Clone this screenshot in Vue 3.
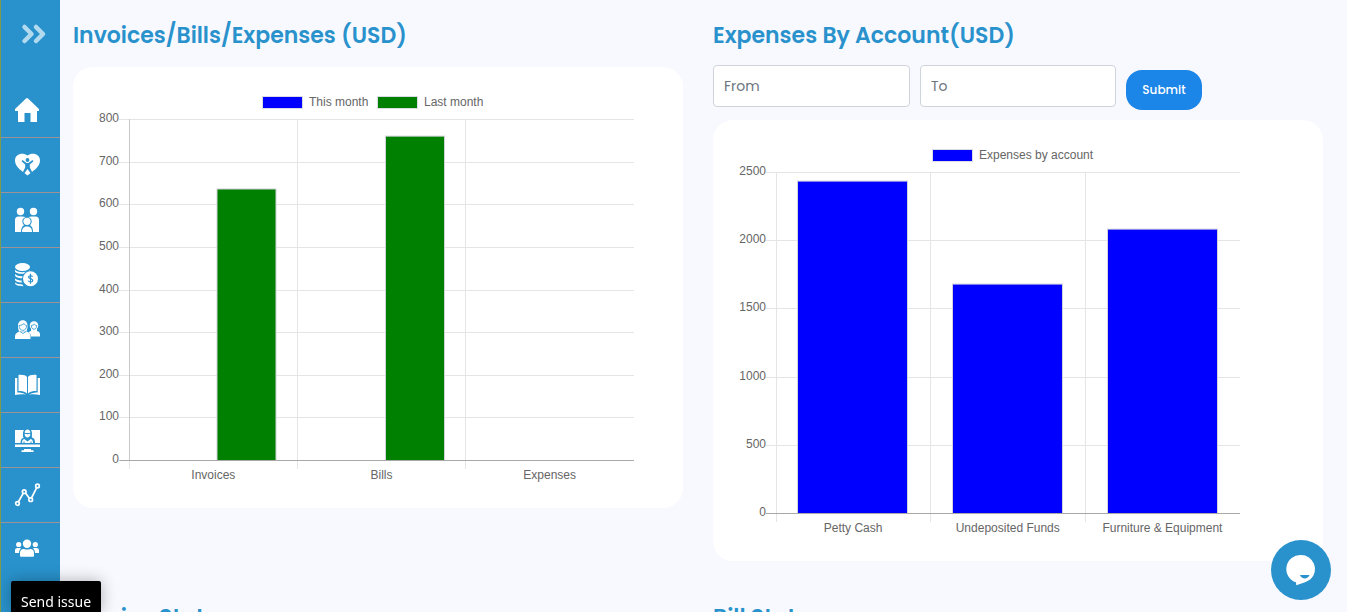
<script setup>
const navItems = ['Home', 'Wellbeing', 'Families', 'Finance', 'Staff', 'Learning', 'Classes', 'Reports', 'Groups']

const monthly = {
  title: 'Invoices, bills and expenses by month',
  left: 56.5,
  right: 561,
  tickX: 46,
  max: 800,
  step: 100,
  labels: ['Invoices', 'Bills', 'Expenses'],
  legend: [
    { text: 'This month', color: 'blue', x: 190 },
    { text: 'Last month', color: 'green', x: 305 }
  ],
  bars: [
    { x: 144, w: 59, value: 637, color: 'green' },
    { x: 312.5, w: 59, value: 761, color: 'green' }
  ]
}

const accounts = {
  title: 'Expenses by account',
  left: 63,
  right: 527,
  tickX: 53,
  max: 2500,
  step: 500,
  labels: ['Petty Cash', 'Undeposited Funds', 'Furniture & Equipment'],
  legend: [{ text: 'Expenses by account', color: 'blue', x: 220 }],
  bars: [
    { x: 84.5, w: 110, value: 2437, color: 'blue' },
    { x: 239.5, w: 110, value: 1682, color: 'blue' },
    { x: 394.5, w: 110, value: 2085, color: 'blue' }
  ]
}

const TOP = 52.5
const BOTTOM = 393.5

const yOf = (chart, value) => BOTTOM - ((BOTTOM - TOP) * value) / chart.max
const ticks = (chart) =>
  Array.from({ length: chart.max / chart.step + 1 }, (_, i) => {
    const value = i * chart.step
    return { value, y: Math.floor(yOf(chart, value)) + 0.5 }
  })
const band = (chart) => (chart.right - chart.left) / chart.labels.length
const columns = (chart) =>
  chart.labels.map((text, i) => ({
    text,
    x: Math.floor(chart.left + band(chart) * i) + 0.5,
    mid: chart.left + band(chart) * (i + 0.5) - 0.25
  }))

const panels = [
  { heading: 'Invoices/Bills/Expenses (USD)', chart: monthly, filter: false },
  { heading: 'Expenses By Account(USD)', chart: accounts, filter: true }
]
</script>

<template>
  <div class="app">
    <aside class="sidebar">
      <button class="toggle" type="button" aria-label="Expand menu">
        <svg width="28" height="24" viewBox="0 0 28 24">
          <path d="M5.500 5l7 7-7 7M17 5l7 7-7 7" fill="none" stroke="#b2daef" stroke-width="4.500" stroke-linecap="round" stroke-linejoin="round" />
        </svg>
      </button>
      <nav>
        <a v-for="(item, i) in navItems" :key="item" class="nav-item" href="#" :aria-label="item">
          <svg width="28" height="28" viewBox="0 0 28 28" fill="#fff">
            <template v-if="i === 0">
              <path d="M12 2.500q1-1 2 0L25 13v2h-2v11h-6.500v-9h-6v9H4V15H1v-2z" />
            </template>
            <template v-else-if="i === 1">
              <path d="M13.500 24.500C9 20.500 1 16.500 1 9.500 1 3 8.500 1 13.500 4.500c5-3.500 12.500-1.500 12.500 5 0 7-8 11-12.500 15z" />
              <g class="cut">
                <circle cx="13.500" cy="9" r="1.900" />
                <path d="M8.500 9l4 3h2l4-3 1 1.200-3.700 3.300v3l2.500 5-1.500 1-3.300-4.500-3.300 4.500-1.500-1 2.500-5v-3l-3.700-3.300z" />
              </g>
            </template>
            <template v-else-if="i === 2">
              <circle cx="6.500" cy="5.500" r="3.700" />
              <circle cx="19.500" cy="5.500" r="3.700" />
              <path d="M1 26V14q0-3.500 3.500-3.500h4Q12 10.500 13 12q1-1.500 4.500-1.500h4Q25 10.500 25 14v12z" />
              <path class="cut" d="M7 26c0-4 1-5.500 3-6.800a4.700 4.700 0 1 1 6 0c2 1.300 3 2.800 3 6.800z" />
              <circle cx="13" cy="15.300" r="3.600" />
              <path d="M8 26c0-4 2-5.500 5-5.500s5 1.500 5 5.500z" />
            </template>
            <template v-else-if="i === 3">
              <ellipse cx="8.500" cy="6" rx="7.500" ry="4" />
              <path d="M1 8.800c2 2.800 11 3.400 15 .2v2.200l-6 1.600C5 13 1 12 1 10zM1 13c2 2 5 2.300 8.500 2.300L8.300 17.200C4 17.200 1 16 1 14zM1 17.500c2 1.500 4 2 6.700 2v2C4 21.500 1 20.500 1 18.500zM1 21.500c2 1.500 4.500 1.800 7.300 2l1.200 1.700C4 25 1 24 1 22z" />
              <circle class="cut" cx="16.500" cy="17.700" r="8.500" />
              <circle cx="16.500" cy="17.700" r="7.500" />
              <path d="M18.500 15.800c-.5-1.400-4-1.500-4 .3s4.200 1.300 4.200 3.300-3.800 1.900-4.400.2M16.500 12.800v10" fill="none" stroke="#2992cc" stroke-width="1.200" />
            </template>
            <template v-else-if="i === 4">
              <circle cx="20" cy="9.500" r="4.300" />
              <path d="M14 20.500v-2c0-2 1-3 3-3.500v-3h6v3c2 .5 3 1.500 3 3.500v2z" />
              <path class="cut" d="M0 24v-3c0-3 2-4.500 4-5-4-6-1-13 5-13s8 7 4.500 13c2 .5 3.500 2 3.500 5v3z" />
              <path d="M4 12V9.500c0-7 9.500-7 9.500 0V12l-1 3.500h-7.500z" />
              <path d="M1 23v-2.500c0-3 2-4 4.500-5h7c2.500 1 4 2 4 5V23z" />
              <path d="M5 9.500c2.500 0 4-1 5-2 .5 1.300 1.500 1.800 2.700 2-.2 6.500-7.500 6.500-7.700 0zM6 15.500l3 2 3-2M17.200 9.500c1.500 0 2.200-.6 3.100-1.400.6 1 1.500 1.300 2.500 1.400-.3 5-5.400 5-5.600 0z" fill="none" stroke="#2992cc" stroke-width=".8" />
            </template>
            <template v-else-if="i === 5">
              <path d="M4.500 4c4-.5 7.500.5 8.500 2v16.500C11 20.500 8 20 4.500 20zM22.500 4c-4-.5-7.500.5-8.500 2v16.500C16 20.500 19 20 22.500 20z" />
              <path d="M1 7h2.300v14.500c3 0 6 .3 8.700 2.300-3-.8-7-.5-11 .2zM26 7h-2.300v14.500c-3 0-6 .3-8.700 2.300 3-.8 7-.5 11 .2z" />
            </template>
            <template v-else-if="i === 6">
              <path d="M1 4h25v13H1zM1 18.500h25V21H1zM10 23h7v1.200h2.500V26h-12v-1.800H10z" />
              <path class="cut" d="M6.500 17c0-3.300 1.200-4.800 3.200-5.300C8.500 10.500 9 9.500 9 7.500c0-7.500 9-7.500 9 0 0 2-.5 3 .3 4.200 2 .5 2.700 2 2.700 5.300z" />
              <path d="M10.500 6.500c.8-4 5.200-4 6 0-2 .8-4 .8-6 0zM10.700 7.700c2 .6 3.600.6 5.600 0 .3 5-5.900 5-5.600 0zM8 17c0-2.500.7-3.500 2.200-4l3.300 2.500 3.300-2.500c1.500.5 2.200 1.500 2.200 4h-1.500v-1.500h-1V17h-6v-1.500h-1V17z" />
            </template>
            <template v-else-if="i === 7">
              <g fill="none" stroke="#fff" stroke-width="1.700">
                <path d="M4.300 21l4.900-8.600M11.500 12l3.900 5.300M17.500 17l5.200-10.300" />
                <circle cx="3.500" cy="22.500" r="1.800" />
                <circle cx="10.200" cy="10.700" r="1.800" />
                <circle cx="16.700" cy="18.700" r="1.800" />
                <circle cx="23.500" cy="5" r="1.800" />
              </g>
            </template>
            <template v-else>
              <circle cx="13" cy="6.800" r="4.200" />
              <circle cx="4.700" cy="7.500" r="2.600" />
              <circle cx="21.300" cy="7.500" r="2.600" />
              <path d="M6 19v-2.500C6 13 7.500 12 10 12c2 .8 4 .8 6 0 2.500 0 4 1 4 4.500V19q0 .8-1 .8H7Q6 19.800 6 19zM1 16v-2.500Q1 11 3.500 11H6q1 0 1 .4C5.500 12.500 5 14 5 16zM25 16v-2.500Q25 11 22.500 11H20q-1 0-1 .4c1.500 1.100 2 2.600 2 4.600z" />
            </template>
          </svg>
        </a>
      </nav>
    </aside>

    <main class="content">
      <section v-for="panel in panels" :key="panel.heading" class="panel">
        <h2>{{ panel.heading }}</h2>
        <form v-if="panel.filter" class="filter" @submit.prevent>
          <input type="text" placeholder="From" aria-label="From" />
          <input type="text" placeholder="To" aria-label="To" />
          <button type="submit">Submit</button>
        </form>
        <div class="card" :class="{ spaced: !panel.filter }">
          <svg class="chart" viewBox="0 0 610 441" role="img" :aria-label="panel.chart.title">
            <g v-for="item in panel.chart.legend" :key="item.text">
              <rect :x="item.x - 0.5" y="29.500" width="40" height="12" :fill="item.color" stroke="#dcdce6" />
              <text :x="item.x + 46" y="39">{{ item.text }}</text>
            </g>
            <g v-for="tick in ticks(panel.chart)" :key="tick.value">
              <line :x1="panel.chart.tickX" :x2="panel.chart.right" :y1="tick.y" :y2="tick.y" stroke="#e5e5e5" />
              <text :x="panel.chart.tickX" :y="tick.y + 2.5" text-anchor="end">{{ tick.value }}</text>
            </g>
            <g v-for="col in columns(panel.chart)" :key="col.text">
              <line :x1="col.x" :x2="col.x" y1="52" y2="402" stroke="#e5e5e5" />
              <text :x="col.mid" y="412" text-anchor="middle">{{ col.text }}</text>
            </g>
            <line v-if="!panel.filter" :x1="panel.chart.left" :x2="panel.chart.left" y1="52" y2="394" stroke="#c8c8c8" />
            <g v-for="bar in panel.chart.bars" :key="bar.x">
              <rect
                :x="bar.x" :width="bar.w" :fill="bar.color"
                :y="yOf(panel.chart, bar.value)"
                :height="BOTTOM - yOf(panel.chart, bar.value)"
                stroke="#d2d2dc"
              />
            </g>
            <line :x1="panel.chart.left - 10" :x2="panel.chart.right" y1="393.500" y2="393.500" stroke="#a8a8a8" />
          </svg>
        </div>
      </section>
      <section class="panel"><h2>Invoice Stats</h2></section>
      <section class="panel"><h2>Bill Stats</h2></section>
    </main>

    <button class="issue" type="button">Send issue</button>
    <button class="chat" type="button" aria-label="Open chat">
      <svg width="60" height="60" viewBox="0 0 60 60">
        <path d="M30 15a14 14 0 0 1 9.500 24.300C35.500 42.500 30 43.500 25.300 45.300L25 42.300A14 14 0 0 1 30 15z" fill="#fff" />
        <path d="M29 35h9.500c-1.500 4.500-8 4.500-9.500 0z" fill="#2992cc" />
      </svg>
    </button>
  </div>
</template>

<style>
body {
  margin: 0;
  background: #f8f9ff;
}
</style>

<style scoped>
* {
  box-sizing: border-box;
}
.app {
  display: flex;
  height: 100vh;
  overflow: hidden;
  font-family: Poppins, Inter, "Open Sans", sans-serif;
}
button {
  border: 0;
  font-family: inherit;
  cursor: pointer;
}
.sidebar {
  flex: 0 0 60px;
  background: #2992cc;
  border-left: 1px solid #7f9c4c;
}
.toggle {
  display: flex;
  align-items: center;
  width: 100%;
  height: 67px;
  margin-bottom: 16px;
  padding: 0 0 0 18px;
  background: none;
}
.nav-item {
  display: flex;
  align-items: center;
  height: 55px;
  padding-left: 13px;
  border-bottom: 1px solid #9c9295;
}
.nav-item:last-child {
  border-bottom: 0;
}
.cut {
  fill: #2992cc;
}
.content {
  flex: 1;
  min-width: 0;
  display: grid;
  grid-template-columns: repeat(2, minmax(0, 1fr));
  align-content: start;
  gap: 21px 30px;
  padding: 0 24px 0 13px;
}
h2 {
  margin: 0;
  padding-top: 21px;
  font-size: 22px;
  line-height: 30px;
  font-weight: 600;
  color: #2992cc;
  white-space: nowrap;
}
.filter {
  display: flex;
  gap: 10px;
  margin: 14px 0 13px;
}
.filter input {
  width: 197px;
  height: 42px;
  padding: 0 10px;
  border: 1px solid #ced4da;
  border-radius: 4px;
  background: #fff;
  font: 400 14px Poppins, Inter, sans-serif;
}
.filter input + input {
  width: 196px;
}
.filter input::placeholder {
  color: #6c757d;
  opacity: 1;
}
.filter button {
  min-width: 76px;
  height: 40px;
  margin-top: 5px;
  margin-bottom: -5px;
  padding: 0 16px;
  border-radius: 16px;
  background: #1b85e8;
  color: #fff;
  font-size: 12px;
  font-weight: 500;
}
.card {
  border-radius: 20px;
  background: #fff;
}
.spaced {
  margin-top: 16px;
}
.chart {
  display: block;
  width: 100%;
}
.chart text {
  font: 12px "Liberation Sans", Arial, sans-serif;
  fill: #666;
}
.issue {
  position: fixed;
  left: 11px;
  bottom: 0;
  height: 31px;
  padding: 10px 10px 0;
  background: #000;
  border-radius: 2px 2px 0 0;
  color: #fff;
  box-shadow: 0 0 16px rgba(0, 0, 0, 0.3);
  font: 14px/21px "Noto Sans", "Open Sans", sans-serif;
  white-space: nowrap;
}
.chat {
  position: fixed;
  right: 16px;
  bottom: 12px;
  width: 60px;
  height: 60px;
  padding: 0;
  border-radius: 50%;
  background: #2992cc;
}
.chat svg {
  display: block;
}
</style>
